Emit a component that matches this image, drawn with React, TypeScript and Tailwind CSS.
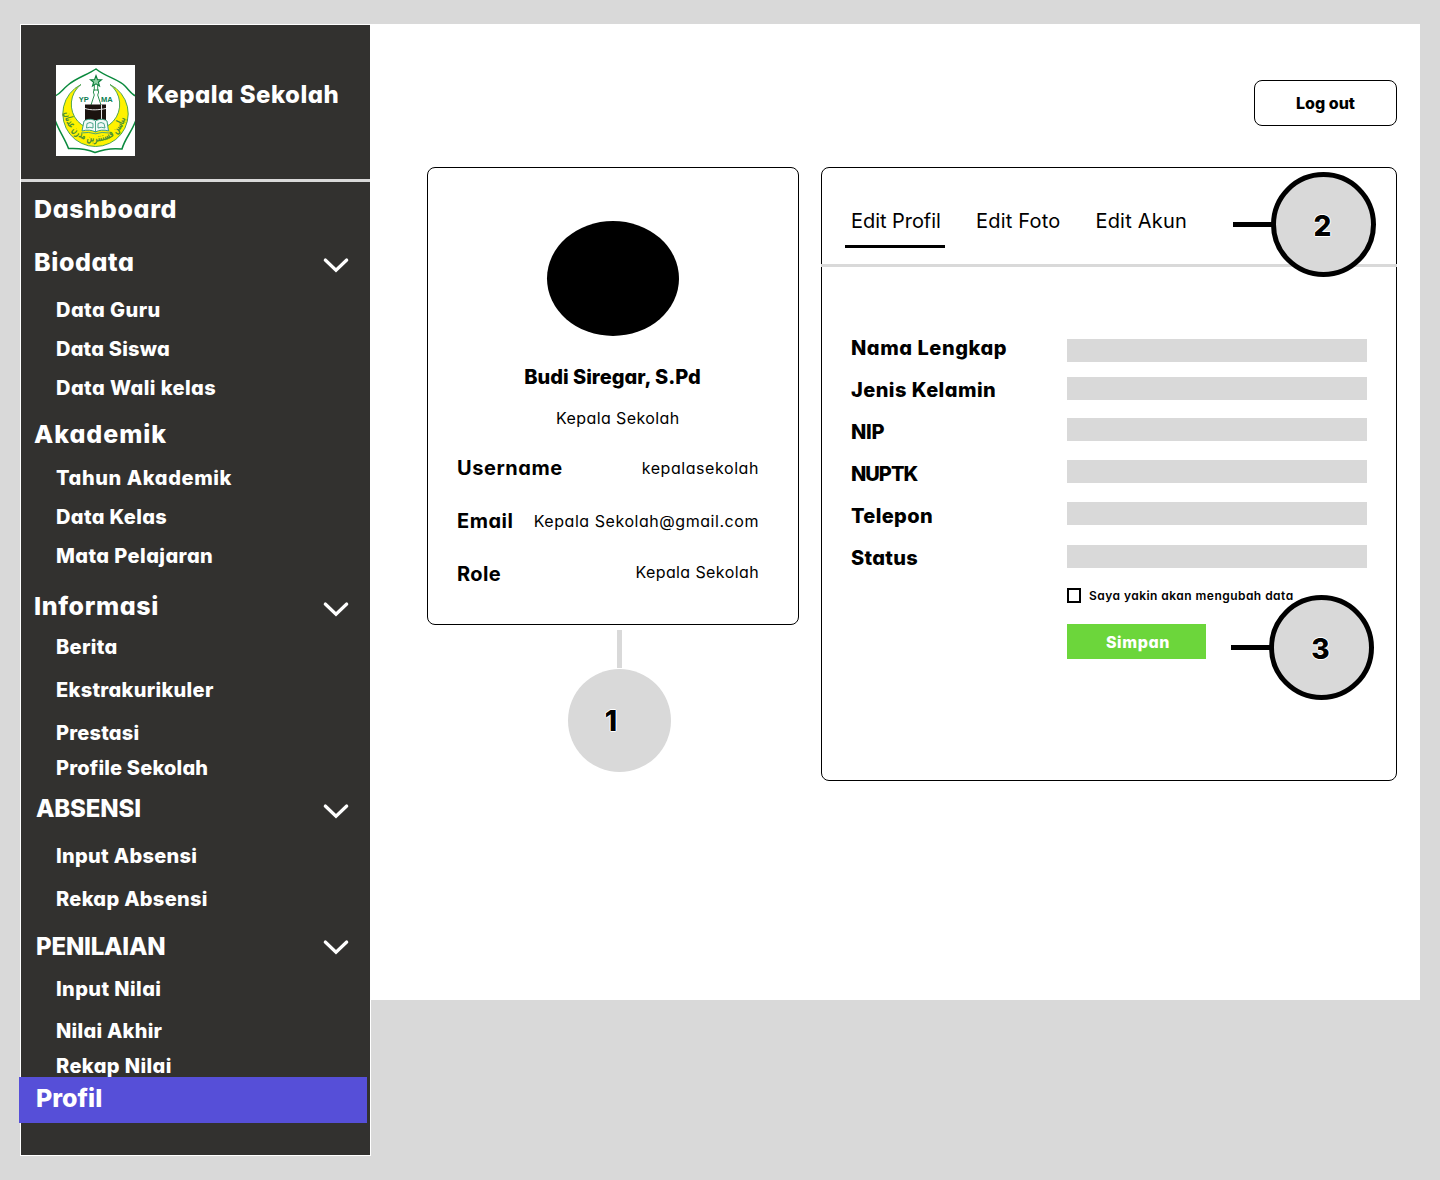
type NavItem = {
  label: string;
  kind: "heading" | "item";
  className: string;
  chevron?: string;
};

const nav: NavItem[] = [
  { label: "Dashboard", kind: "heading", className: "mt-[11px] pl-[13px] text-[25px] tracking-[0.65px]" },
  { label: "Biodata", kind: "heading", className: "mt-[21px] pl-[13px] text-[25px] tracking-[0.6px]", chevron: "mt-[5px]" },
  { label: "Data Guru", kind: "item", className: "mt-5 tracking-[0.45px]" },
  { label: "Data Siswa", kind: "item", className: "mt-[15px] tracking-[0.2px]" },
  { label: "Data Wali kelas", kind: "item", className: "mt-[15px] tracking-[0.43px]" },
  { label: "Akademik", kind: "heading", className: "mt-[18px] pl-[13px] text-[25px] tracking-[0.95px]" },
  { label: "Tahun Akademik", kind: "item", className: "mt-4 tracking-[0.6px]" },
  { label: "Data Kelas", kind: "item", className: "mt-[15px] tracking-[0.35px]" },
  { label: "Mata Pelajaran", kind: "item", className: "mt-[15px] tracking-[0.43px]" },
  { label: "Informasi", kind: "heading", className: "mt-[22px] pl-[13px] text-[25px] tracking-[0.6px]", chevron: "mt-[5px]" },
  { label: "Berita", kind: "item", className: "mt-[13px] tracking-[0.3px]" },
  { label: "Ekstrakurikuler", kind: "item", className: "mt-[19px] tracking-[0.3px]" },
  { label: "Prestasi", kind: "item", className: "mt-[19px] tracking-[0.2px]" },
  { label: "Profile Sekolah", kind: "item", className: "mt-[11px] tracking-[0.18px]" },
  { label: "ABSENSI", kind: "heading", className: "mt-[13px] pl-[15px] text-2xl tracking-[-0.15px]", chevron: "mt-[4px]" },
  { label: "Input Absensi", kind: "item", className: "mt-[19px] tracking-[0.3px]" },
  { label: "Rekap Absensi", kind: "item", className: "mt-[19px] tracking-[0.3px]" },
  { label: "PENILAIAN", kind: "heading", className: "mt-[20px] pl-[15px] text-2xl tracking-[-0.2px]", chevron: "" },
  { label: "Input Nilai", kind: "item", className: "mt-[14px] tracking-[0.4px]" },
  { label: "Nilai Akhir", kind: "item", className: "mt-[18px] tracking-[0.25px]" },
  { label: "Rekap Nilai", kind: "item", className: "relative z-10 mt-[11px] tracking-[0.4px]" },
];

function SchoolLogo() {
  return (
    <svg viewBox="0 0 79 91" className="h-[91px] w-[79px] shrink-0 bg-white">
      <path d="M-1 31 C4 29 6 25 12 20 C20 13 31 10 40 4 C50 12 62 14 69 21 C73 25 76 30 80 31" fill="none" stroke="#0b8a3e" strokeWidth="1.5" />
      <path d="M-1 55 C3 66 9 74 12.500 83.500 C22 83 31 84 39 87.500 C48 84 57 83 66 84 C69 73 76 67 80 55" fill="none" stroke="#0b8a3e" strokeWidth="1.5" />
      <path d="M25 19.500 A32.700 32.700 0 1 0 54 19.500 A24.200 24.800 0 1 1 25 19.500 Z" fill="#fff200" stroke="#3c9a48" strokeWidth="0.9" />
      <path id="motto" d="M8.200 43 A31.300 31.300 0 0 0 70.500 49" fill="none" />
      <text fontSize="11" fill="#4b9136" fontFamily="DejaVu Sans">
        <textPath href="#motto" startOffset="50%" textAnchor="middle" textLength="88" lengthAdjust="spacingAndGlyphs">يياسن فستنترين مدرن عدنان</textPath>
      </text>
      <path d="M40 10.500 L41.500 14.600 L45.500 14.700 L42.400 17.200 L43.500 21 L40 18.800 L36.500 21 L37.600 17.200 L34.500 14.700 L38.500 14.600 Z" fill="#8fd0a3" stroke="#0b7d3a" strokeWidth="1.1" />
      <path d="M38.300 20 V25 L37.300 27 L38.300 30 L35 40 M41.700 20 V25 L42.700 27 L41.700 30 L45 40 M37 25 H43" fill="none" stroke="#2b8f50" strokeWidth="1" />
      <text x="22.800" y="36.500" fontSize="7.500" fontWeight="700" fontFamily="Liberation Sans" fill="#0b7d50">YP</text>
      <text x="45" y="36.500" fontSize="7.500" fontWeight="700" fontFamily="Liberation Sans" fill="#0b7d50">MA</text>
      <path d="M29 39.500 H50 V55 H29 Z" fill="#1b130f" />
      <path d="M29 43.500 C35 45.500 43 45 50 43.500 M45.500 39.500 V54" fill="none" stroke="#e5e5e5" strokeWidth="1" />
      <path d="M28 56 C32 53.500 37 54 39.500 56 C43 54 47 53.500 51 56 L52.500 66 C48 64.500 43 65 39.500 67 C36 65 31 64.500 26 66 Z" fill="#f2faf8" stroke="#3a9d80" strokeWidth="1" />
      <path d="M39.500 56 V67 M31 58.500 Q34 56.500 37 58.500 V63 Q34 61.500 30.500 63 Z M42 58.500 Q45 56.500 48 58.500 L49 63 Q45 61.500 42 63 Z M25 68 Q33 66.500 39.500 68.800 Q46 66.500 53 68" fill="none" stroke="#3a9d80" strokeWidth="0.9" />
    </svg>
  );
}

function Chevron({ className }: { className: string }) {
  return (
    <svg viewBox="0 0 26 16" className={`h-4 w-[26px] ${className}`}>
      <path d="M2.300 3 L13 13.200 L23.700 3" fill="none" stroke="white" strokeWidth="3.2" strokeLinecap="round" strokeLinejoin="miter" />
    </svg>
  );
}

function Sidebar() {
  return (
    <aside className="h-[1132px] w-[351px] shrink-0 border border-white bg-[#32312f] font-extrabold text-white">
      <div className="flex h-[157px] border-b-[3px] border-[#d9d9d9] pt-10 pl-[35px]">
        <SchoolLogo />
        <div className="mt-[14px] ml-3 h-8 text-2xl leading-8 tracking-[0.5px] whitespace-nowrap">Kepala Sekolah</div>
      </div>
      <nav className="flex flex-col">
        {nav.map((n) =>
          n.kind === "heading" ? (
            <div key={n.label} className={`flex h-8 items-center justify-between pr-[21px] leading-8 ${n.className}`}>
              <span className="leading-8">{n.label}</span>
              {n.chevron !== undefined && <Chevron className={n.chevron} />}
            </div>
          ) : (
            <div key={n.label} className={`h-6 pl-[35px] text-xl leading-6 ${n.className}`}>{n.label}</div>
          ),
        )}
        <div className="-mt-px -ml-0.5 h-[46px] w-[348px] bg-[#564fd8] pl-[17px] text-[25px] leading-[43px]">Profil</div>
      </nav>
    </aside>
  );
}

const outline = "[text-shadow:1px_0_#fff,-1px_0_#fff,0_1px_#fff,0_-1px_#fff]";

function ProfileCard() {
  return (
    <section className="relative h-[458px] w-[372px] rounded-lg border border-black pt-[53px]">
      <div className="ml-[119px] h-[115px] w-[132px] rounded-[50%] bg-black" />
      <div className="mt-[29px] pr-px text-center text-xl leading-6 font-extrabold">Budi Siregar, S.Pd</div>
      <div className="mt-[17px] pl-[128px] leading-6 tracking-[0.4px]">Kepala Sekolah</div>
      <dl className="mt-[26px] flex flex-col gap-[29px] pr-[39px] pl-[29px] leading-6">
        <div className="flex justify-between">
          <dt className="text-xl leading-6 font-bold tracking-[0.55px]">Username</dt>
          <dd className="tracking-[0.57px]">kepalasekolah</dd>
        </div>
        <div className="flex justify-between">
          <dt className="text-xl leading-6 font-bold tracking-[0.5px]">Email</dt>
          <dd className="whitespace-nowrap tracking-[0.55px]">Kepala Sekolah@gmail.com</dd>
        </div>
        <div className="flex justify-between">
          <dt className="text-xl leading-6 font-bold tracking-[0.4px]">Role</dt>
          <dd className="-mt-0.5 tracking-[0.4px]">Kepala Sekolah</dd>
        </div>
      </dl>
      <div className="absolute top-[462px] left-[140px] flex w-[103px] flex-col items-center">
        <div className="h-[38px] w-[5px] bg-[#d9d9d9]" />
        <div className={`mt-px h-[103px] w-[103px] rounded-full bg-[#d9d9d9] pr-[17px] text-center text-[28px] leading-[105px] font-extrabold ${outline}`}>1</div>
      </div>
    </section>
  );
}

function Marker({ value, className }: { value: string; className: string }) {
  return (
    <div className={`absolute flex items-center ${className}`}>
      <div className="h-[5px] w-10 bg-black" />
      <div className={`-ml-0.5 h-[105px] w-[105px] rounded-full border-5 border-black bg-[#d9d9d9] pr-0.5 text-center text-[28px] leading-[99px] font-extrabold ${outline}`}>{value}</div>
    </div>
  );
}

const fields = [
  { label: "Nama Lengkap", text: "tracking-[0.55px]", box: "mt-[3px]" },
  { label: "Jenis Kelamin", text: "tracking-[0.45px]", box: "-mt-px" },
  { label: "NIP", text: "tracking-[-0.3px]", box: "-mt-[2px]" },
  { label: "NUPTK", text: "tracking-[-1px]", box: "-mt-[2px]" },
  { label: "Telepon", text: "tracking-[0.35px]", box: "-mt-[2px]" },
  { label: "Status", text: "tracking-[0.3px]", box: "-mt-px" },
];

function EditCard() {
  return (
    <section className="relative h-[614px] w-[576px] rounded-lg border border-black">
      <div className="-mx-px flex h-[99px] border-b-[3px] border-[#d9d9d9] pt-[41px] pl-6 text-xl leading-6">
        <div className="h-[39px] w-[100px] border-b-[3px] border-black pl-[6px] tracking-[-0.05px]">Edit Profil</div>
        <div className="ml-[31px] tracking-[0.2px]">Edit Foto</div>
        <div className="ml-[35px] tracking-[0.2px]">Edit Akun</div>
      </div>
      <form className="pt-[69px] pl-7">
        <div className="flex flex-col gap-[18px]">
          {fields.map((f) => (
            <label key={f.label} className="flex h-6">
              <span className={`w-[217px] pl-px text-xl leading-6 font-extrabold ${f.text}`}>{f.label}</span>
              <span className={`h-[23px] w-[300px] bg-[#d9d9d9] ${f.box}`} />
            </label>
          ))}
        </div>
        <div className="mt-[18px] ml-[217px] flex h-[15px] items-center">
          <span className="h-[15px] w-3.5 border-2 border-black" />
          <span className="ml-2 text-xs leading-4 font-semibold tracking-[0.46px]">Saya yakin akan mengubah data</span>
        </div>
        <button type="button" className="mt-[21px] ml-[217px] block h-[35px] w-[139px] bg-[#6cd63b] pl-[3px] text-center leading-[36px] font-extrabold tracking-[0.6px] text-white">Simpan</button>
      </form>
      <Marker value="2" className="top-1 left-[411px]" />
      <Marker value="3" className="top-[427px] left-[409px]" />
    </section>
  );
}

export default function App() {
  return (
    <div className="flex h-[1180px] w-[1440px] overflow-hidden bg-[#d9d9d9] pt-6 pl-5 font-[Inter,sans-serif] text-black [font-feature-settings:'cv11']">
      <Sidebar />
      <main className="h-[976px] w-[1049px] bg-white pt-14 pr-[23px] pl-14">
        <div className="flex justify-end">
          <button type="button" className="h-[46px] w-[143px] rounded-lg border border-black text-center font-extrabold">Log out</button>
        </div>
        <div className="mt-[41px] flex items-start justify-between">
          <ProfileCard />
          <EditCard />
        </div>
      </main>
    </div>
  );
}
